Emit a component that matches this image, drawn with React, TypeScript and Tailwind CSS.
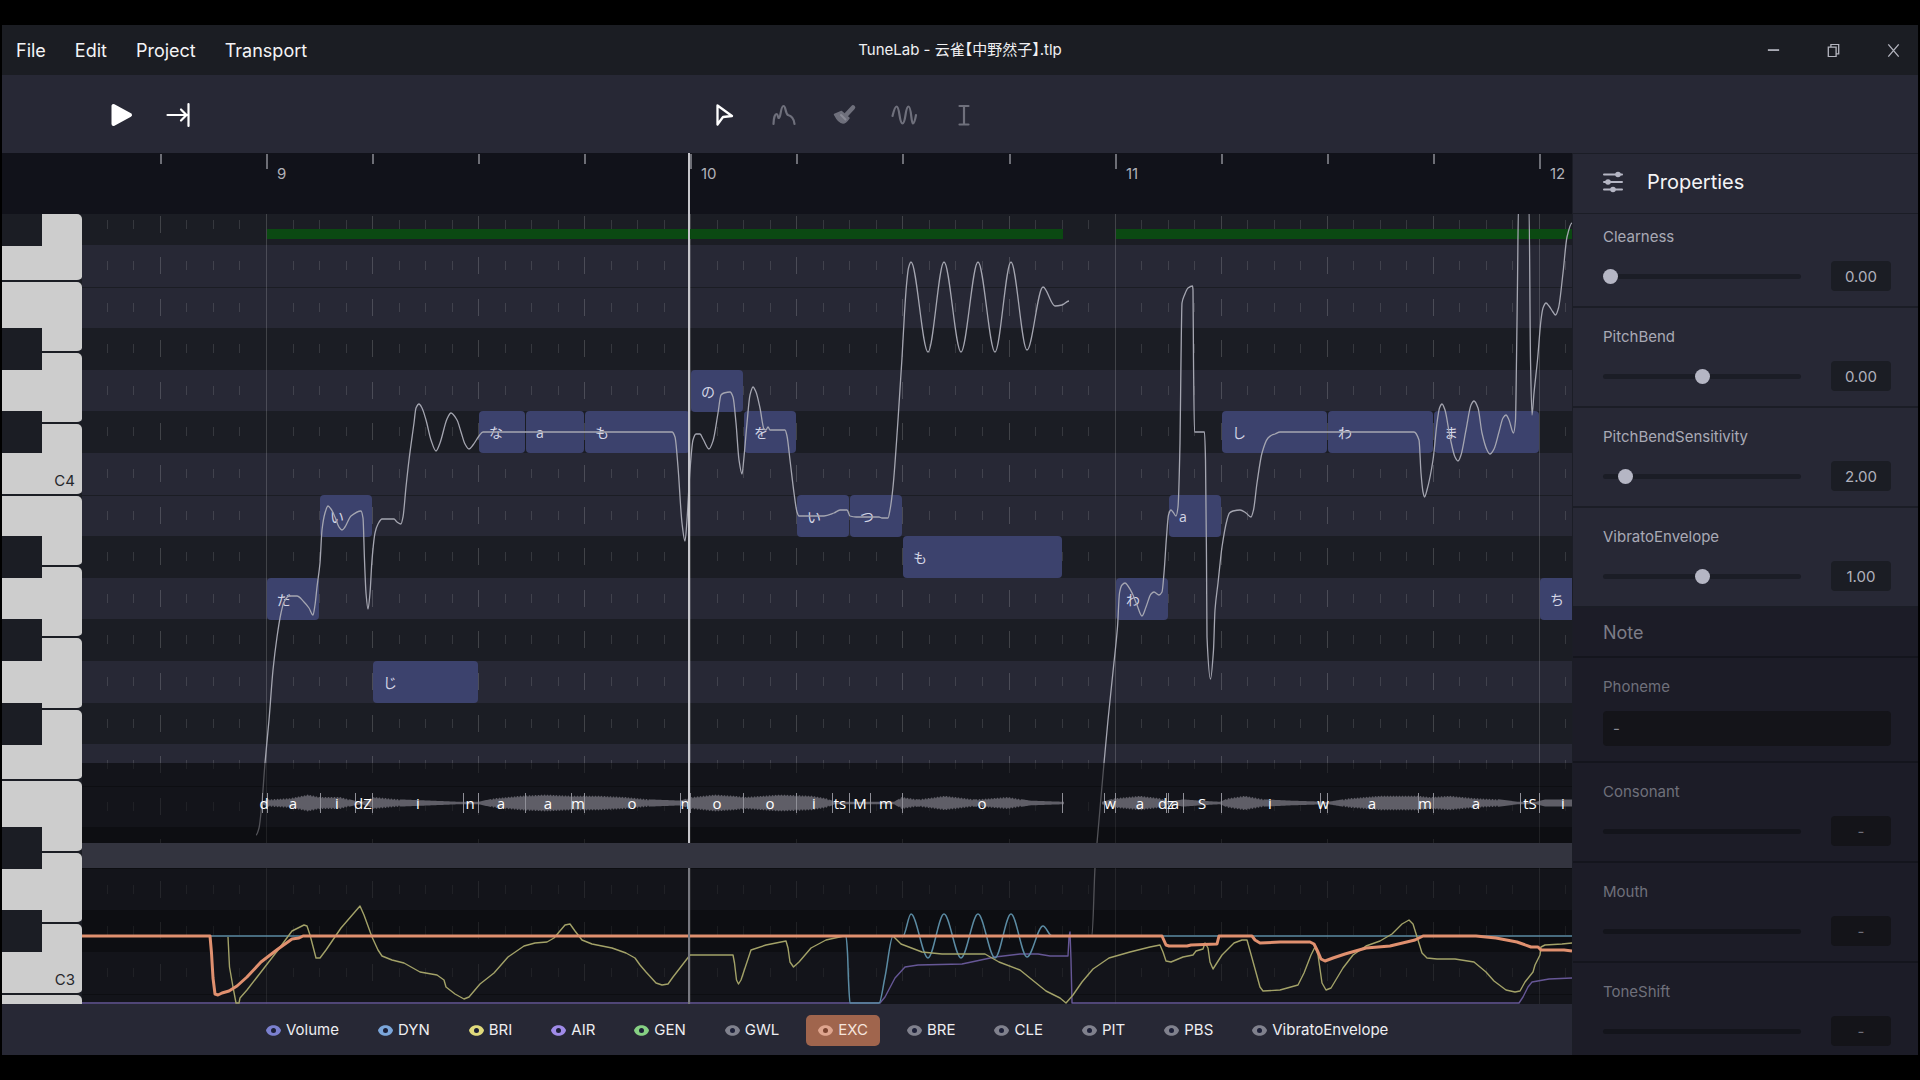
import type { ReactNode } from 'react'
import clsx from 'clsx'

type Point = [number, number]

// Window-space origin of the piano roll; curve data is recorded in window space.
const ROLL_X = 82
const ROLL_Y = 214
const AUTOMATION_Y = 868

const BAR_NINE = 185
const OCTAVE = 499
const C4_TOP = 239

const xOf = (sixteenth: number) => Math.round(BAR_NINE + (sixteenth * 424.3) / 16)
const yOf = (pitch: number) => Math.round(C4_TOP + ((60 - pitch) * OCTAVE) / 12)
const isBlack = (pitch: number) => [1, 3, 6, 8, 10].includes(pitch % 12)

const pitches = Array.from({ length: 20 }, (_, i) => 66 - i)
const steps = Array.from({ length: 60 }, (_, i) => i - 6)

const menus = ['File', 'Edit', 'Project', 'Transport']

const notes = [
  { lyric: 'だ', pitch: 57, start: 0, length: 2 },
  { lyric: 'い', pitch: 59, start: 2, length: 2 },
  { lyric: 'じ', pitch: 55, start: 4, length: 4 },
  { lyric: 'な', pitch: 61, start: 8, length: 1.75 },
  { lyric: 'a', pitch: 61, start: 9.75, length: 2.25 },
  { lyric: 'も', pitch: 61, start: 12, length: 4 },
  { lyric: 'の', pitch: 62, start: 16, length: 2 },
  { lyric: 'を', pitch: 61, start: 18, length: 2 },
  { lyric: 'い', pitch: 59, start: 20, length: 2 },
  { lyric: 'つ', pitch: 59, start: 22, length: 2 },
  { lyric: 'も', pitch: 58, start: 24, length: 6 },
  { lyric: 'わ', pitch: 57, start: 32, length: 2 },
  { lyric: 'a', pitch: 59, start: 34, length: 2 },
  { lyric: 'し', pitch: 61, start: 36, length: 4 },
  { lyric: 'わ', pitch: 61, start: 40, length: 4 },
  { lyric: 'ま', pitch: 61, start: 44, length: 4 },
  { lyric: 'ち', pitch: 57, start: 48, length: 4 },
]

const phonemes: [string, number][] = [
  ['d', 264], ['a', 293], ['i', 337], ['dZ', 363], ['i', 418], ['n', 470], ['a', 501], ['a', 548],
  ['m', 578], ['o', 632], ['n', 685], ['o', 717], ['o', 770], ['i', 814], ['ts', 840], ['M', 860],
  ['m', 886], ['o', 982], ['w', 1110], ['a', 1140], ['dz', 1166], ['a', 1175], ['S', 1202],
  ['i', 1270], ['w', 1323], ['a', 1372], ['m', 1425], ['a', 1476], ['tS', 1530], ['i', 1563],
]

const separators = [
  262, 267, 320, 355, 372, 463, 478, 525, 571, 584, 680, 690, 743, 796, 832, 849, 870, 902, 1062,
  1104, 1115, 1166, 1168, 1183, 1221, 1320, 1327, 1418, 1433, 1520, 1539,
]

// [x, half height] of the rendered audio
const envelopes: Point[][] = [
  [
    [262, 1], [268, 3], [290, 4], [308, 7], [320, 5], [340, 5], [354, 2], [362, 1], [374, 5],
    [400, 3], [430, 2], [460, 1], [478, 1], [495, 4], [520, 6], [545, 7], [572, 6], [600, 6],
    [625, 5], [650, 3], [680, 2], [692, 5], [715, 7], [735, 6], [745, 5], [780, 7], [812, 6],
    [826, 4], [835, 1], [880, 1], [894, 1], [902, 5], [918, 3], [945, 6], [975, 3], [1008, 5],
    [1030, 2], [1064, 1],
  ],
  [
    [1102, 1], [1115, 4], [1140, 6], [1160, 4], [1168, 1], [1183, 3], [1200, 2], [1220, 1],
    [1228, 4], [1245, 6], [1265, 3], [1290, 2], [1328, 1], [1350, 4], [1380, 6], [1418, 6],
    [1430, 5], [1450, 6], [1475, 4], [1500, 3], [1518, 1], [1536, 1], [1545, 3], [1572, 3],
  ],
]

const pitchCurves: Point[][] = [
  [
    [256, 835], [259, 828], [262, 802], [265, 763], [269, 720], [273, 670], [277, 637], [281, 613],
    [284, 602], [289, 596], [297, 596], [304, 602], [309, 608], [313, 615], [315, 605], [317, 587],
    [320, 563], [322, 530], [325, 513], [328, 506], [331, 509], [335, 517], [339, 527], [342, 530],
    [345, 527], [351, 516], [361, 511], [363, 518], [364.5, 560], [366, 593], [368, 609],
    [370, 593], [372, 560], [375, 533], [378, 524], [382, 519], [394, 519], [397, 522], [401, 524],
    [403, 517], [406, 487], [409, 460], [414, 423], [416, 408], [419, 404], [422, 408], [426, 420],
    [431, 440], [436, 451], [440, 443], [447, 419], [451, 413], [457, 420], [461, 432], [465, 444],
    [469, 449], [473, 445], [479, 436], [483, 432], [672, 432], [675, 437], [678, 467], [682, 523],
    [685, 541], [687, 520], [690, 470], [693, 440], [696, 434], [700, 434], [703, 439], [709, 449],
    [713, 441], [718, 413], [721, 395], [724, 393], [730, 392], [733, 397], [736, 423], [739, 460],
    [742, 474], [744, 457], [747, 423], [750, 395], [753, 387], [756, 392], [760, 408], [764, 429],
    [766, 430], [768, 427], [770, 430], [785, 430], [787, 436], [790, 460], [794, 493], [797, 512],
    [799, 516], [809, 516], [824, 516], [834, 513], [840, 510], [847, 510], [850, 516], [856, 517],
    [879, 517], [882, 518], [888, 518], [890, 510], [893, 487], [898, 420], [902, 358],
    [904.5, 313], [906.5, 285], [908.5, 268], [911, 262], [928, 352], [944, 262], [961, 352],
    [978, 262], [995, 352], [1011, 262], [1027, 350], [1043, 287], [1055, 306], [1062, 305],
    [1069, 301],
  ],
  [
    [1092, 935], [1095, 868], [1097, 843], [1104, 763], [1108, 720], [1113.5, 667], [1117.5, 627],
    [1119.5, 593], [1122, 585], [1125, 583], [1128, 586], [1133, 595], [1137, 605], [1142, 616],
    [1146, 607], [1151, 594], [1154, 592], [1159, 595], [1162, 592], [1164, 573], [1166.5, 537],
    [1168.5, 515], [1171, 510], [1173, 512], [1176, 516], [1178, 507], [1180, 443], [1181, 360],
    [1182, 303], [1184.5, 295], [1188, 288], [1192.5, 286], [1193, 290], [1193.5, 360],
    [1194.5, 432], [1204.5, 432], [1205.5, 460], [1206.5, 560], [1207, 637], [1210.5, 679],
    [1213.5, 650], [1215, 610], [1218, 583], [1222, 547], [1227, 520], [1229.5, 513], [1233, 511],
    [1240, 510], [1246, 513], [1251, 517], [1253.5, 510], [1257, 483], [1262, 453], [1268, 438],
    [1272, 435], [1275, 434], [1280, 432], [1414, 432], [1419, 440], [1421, 473], [1423, 492],
    [1424.5, 497], [1427, 490], [1433, 460], [1437, 423], [1439.5, 408], [1442, 404], [1445, 410],
    [1450, 437], [1455, 457], [1458, 461], [1461, 455], [1466, 430], [1471, 405], [1474, 401],
    [1478, 408], [1482, 433], [1487, 450], [1490, 454], [1494, 449], [1499, 432], [1503, 418],
    [1506, 415], [1509, 420], [1513.5, 433], [1515.5, 420], [1516.5, 360], [1517.5, 283],
    [1518.5, 205], [1529, 205], [1530.5, 360], [1532, 415], [1534, 393], [1537.5, 360], [1541, 320],
    [1543, 308], [1546, 303], [1549, 306], [1553, 312], [1555.5, 315], [1558.5, 308], [1563, 273],
    [1567, 237], [1572, 223],
  ],
]

const excCurve: Point[] = [
  [82, 936], [210, 936], [211.5, 953], [213, 978], [215, 994], [218, 995], [222, 993], [229, 991],
  [237, 986], [247, 977], [261, 962], [278, 949], [292, 939], [299, 938], [303, 936], [1162, 936],
  [1166, 945], [1169, 946], [1187, 946], [1191, 945], [1217, 944], [1219, 936], [1252, 936],
  [1255, 940], [1260, 943], [1280, 942], [1310, 942], [1314, 944], [1318, 952], [1321, 959],
  [1325, 961], [1333, 958], [1345, 954], [1366, 948], [1390, 946], [1415, 940], [1423, 936],
  [1476, 936], [1496, 938], [1517, 942], [1531, 947], [1538, 947], [1541, 950], [1564, 950],
  [1572, 951],
]

const briCurve: Point[] = [
  [228, 937], [229.5, 967], [233, 987], [236, 1003], [239, 1003], [240, 998], [247, 990],
  [261, 972], [278, 950], [292, 931], [300, 927], [304, 925], [307, 926], [310, 935], [316, 958],
  [320, 958], [326, 950], [341, 928], [360, 906], [364, 915], [372, 937], [378, 950], [382, 956],
  [392, 960], [404, 963], [420, 972], [437, 975], [444, 980], [446, 987], [455, 994], [464, 999],
  [469, 997], [480, 984], [494, 973], [508, 957], [524, 946], [535, 943], [547, 942], [554, 938],
  [565, 925], [570, 924], [575, 931], [582, 940], [592, 944], [612, 948], [626, 953], [635, 958],
  [640, 965], [646, 972], [656, 983], [662, 985], [668, 984], [673, 977], [690, 955], [733, 955],
  [734.5, 963], [736.5, 980], [738.5, 984], [741, 980], [751, 950], [766, 945], [786, 941],
  [788, 948], [790, 962], [793.5, 967], [799, 962], [811, 948], [826, 940], [844, 936], [893, 936],
  [901, 944], [922, 952], [942, 954], [985, 954], [999, 962], [1020, 970], [1046, 991],
  [1060, 998], [1066, 1003], [1073, 995], [1082, 982], [1093, 969], [1109, 958], [1130, 952],
  [1150, 947], [1160, 945], [1163, 952], [1166, 961], [1171, 962], [1183, 957], [1193, 955],
  [1196, 951], [1203, 949], [1205, 943], [1208, 948], [1210, 962], [1213, 969], [1222, 955],
  [1234, 943], [1242, 940], [1247, 940], [1252, 958], [1260, 987], [1263, 991], [1280, 990],
  [1298, 985], [1304, 973], [1311, 955], [1315, 947], [1318, 955], [1322, 983], [1326, 990],
  [1331, 988], [1343, 968], [1353, 955], [1366, 946], [1380, 941], [1392, 934], [1402, 924],
  [1409, 920], [1413, 924], [1418, 940], [1422, 953], [1427, 958], [1437, 959], [1455, 959],
  [1474, 962], [1486, 972], [1494, 981], [1506, 990], [1515, 992], [1520, 991], [1525, 982],
  [1533, 972], [1535, 965], [1540, 955], [1541, 947], [1545, 945], [1562, 944], [1572, 943],
]

const dynCurve: Point[] = [
  [82, 936], [846, 936], [847.5, 953], [848.5, 980], [850, 1003], [879, 1003], [885, 977],
  [893, 936], [903, 936], [911, 914], [928, 958], [944, 914], [961, 958], [978, 914], [995, 958],
  [1011, 914], [1027, 957], [1043, 926], [1052, 936], [1572, 936],
]

const airCurve: Point[] = [
  [82, 1003], [880, 1003], [885, 997], [895, 978], [905, 967], [918, 965], [962, 964], [995, 957],
  [1020, 954], [1038, 954], [1050, 956], [1068, 956], [1069, 937], [1070, 932], [1071, 960],
  [1072, 1003], [1519, 1003], [1523, 997], [1528, 987], [1532, 982], [1549, 979], [1572, 978],
]

const automations = [
  { name: 'Volume', color: '#7b80cf' },
  { name: 'DYN', color: '#7ba6da' },
  { name: 'BRI', color: '#e0da7c' },
  { name: 'AIR', color: '#a08be8' },
  { name: 'GEN', color: '#86d083' },
  { name: 'GWL' },
  { name: 'EXC', color: '#dfa58e', active: true },
  { name: 'BRE' },
  { name: 'CLE' },
  { name: 'PIT' },
  { name: 'PBS' },
  { name: 'VibratoEnvelope' },
]

// Monotone cubic interpolation, so peaks stay where the data puts them.
function curvePath(points: Point[], offsetY: number) {
  const p = points.map(([x, y]) => [x - ROLL_X, y - offsetY])
  const slope = (i: number) => (p[i + 1][1] - p[i][1]) / (p[i + 1][0] - p[i][0])
  const tangents = p.map((_, i) => {
    if (i === 0 || i === p.length - 1) return 0
    const a = slope(i - 1)
    const b = slope(i)
    return a * b <= 0 ? 0 : (2 * a * b) / (a + b)
  })
  let d = `M${p[0][0]} ${p[0][1]}`
  for (let i = 0; i < p.length - 1; i++) {
    const third = (p[i + 1][0] - p[i][0]) / 3
    d += `C${p[i][0] + third} ${p[i][1] + tangents[i] * third} ${p[i + 1][0] - third} ${
      p[i + 1][1] - tangents[i + 1] * third
    } ${p[i + 1][0]} ${p[i + 1][1]}`
  }
  return d
}

function linePath(points: Point[], offsetY: number) {
  return 'M' + points.map(([x, y]) => `${x - ROLL_X} ${y - offsetY}`).join('L')
}

function wavePath(points: Point[]) {
  const top: string[] = []
  const bottom: string[] = []
  let k = 0
  for (let x = points[0][0]; x <= points[points.length - 1][0]; x++) {
    while (points[k + 1] && points[k + 1][0] < x) k++
    const [x0, h0] = points[k]
    const [x1, h1] = points[k + 1]
    const h = h0 + ((h1 - h0) * (x - x0)) / (x1 - x0)
    const jag = h > 3 && x % 3 === 0 ? 1.5 : 0
    top.push(`${x - ROLL_X} ${40 - h * 1.2 + jag}`)
    bottom.unshift(`${x - ROLL_X} ${40 + h * 1.2 - jag}`)
  }
  return `M${top.join('L')}L${bottom.join('L')}Z`
}

function TitleBar() {
  return (
    <header className="grid h-[50px] shrink-0 grid-cols-[1fr_auto_1fr] items-center bg-[#1b1d23]">
      <nav className="flex gap-[29px] pl-[14px] text-[18px] text-[#f4f4f6]" aria-label="Main menu">
        {menus.map((menu) => (
          <button key={menu} type="button">
            {menu}
          </button>
        ))}
      </nav>
      <h1 className="text-[15px] text-[#f0f0f2] [font-feature-settings:'halt']">
        TuneLab - 云雀【中野然子】.tlp
      </h1>
      <div className="flex justify-end gap-[10px] text-[#b4b5bf]">
        <WindowButton label="Minimize">
          <path d="M1 7h13" strokeWidth="2" />
        </WindowButton>
        <WindowButton label="Restore">
          <path d="M1.500 3.500h9v11h-9zM4.500 3.500v-3h9v11h-3" />
        </WindowButton>
        <WindowButton label="Close">
          <path d="M1.500 .5l12 14M13.500 .5l-12 14" />
        </WindowButton>
      </div>
    </header>
  )
}

function WindowButton({ label, children }: { label: string; children: ReactNode }) {
  return (
    <button type="button" aria-label={label} className="grid h-[50px] w-[50px] place-items-center">
      <svg className="h-[13px] w-[13px]" viewBox="0 0 15 15" fill="none" stroke="currentColor" strokeWidth="1.500">
        {children}
      </svg>
    </button>
  )
}

function ToolButton({ label, children, active }: { label: string; children: ReactNode; active?: boolean }) {
  return (
    <button type="button" aria-label={label} className={active ? 'text-white' : 'text-[#6f707c]'}>
      <svg
        className="h-7 w-7"
        viewBox="0 0 28 28"
        fill="none"
        stroke="currentColor"
        strokeWidth="2.200"
        strokeLinecap="round"
        strokeLinejoin="round"
      >
        {children}
      </svg>
    </button>
  )
}

function Toolbar() {
  return (
    <div className="flex h-[78px] shrink-0 items-center bg-[#272835] pt-px">
      <div className="flex w-[708px] gap-[30px] pl-[105px]">
        <ToolButton label="Play" active>
          <path d="M6.500 5v18L23 14Z" fill="currentColor" strokeWidth="4" />
        </ToolButton>
        <ToolButton label="Go to end" active>
          <path d="M2.500 14h20M16 8.500l5.500 5.500-5.500 5.500M23.500 3v22" strokeWidth="2.200" />
        </ToolButton>
      </div>
      <div className="flex gap-8">
        <ToolButton label="Select" active>
          <path d="M7.500 4.500L22 15L13 16L7.500 23.500Z" strokeWidth="2.300" />
        </ToolButton>
        <ToolButton label="Pitch">
          <path d="M3.500 23c.2-6 1.500-10 3-10 1.800 0 1 4 2.400 4 2 0 1.600-12 4.600-12 2.500 0 1.500 7 4.500 9 4 1 6 3.500 6.500 9" />
        </ToolButton>
        <ToolButton label="Brush">
          <path d="M23 6.500l-6.500 7" strokeWidth="4.500" />
          <path d="M4.500 13.500l7-3 7.500 6.500c-2 3-4 5-6 5-3 0-6.500-4.500-8.500-8.500Z" fill="currentColor" strokeWidth="1.500" />
          <path d="M11 14l4.500 4.500" stroke="#8a8b96" strokeWidth="2" />
        </ToolButton>
        <ToolButton label="Vibrato">
          <path d="M2.500 15c1.500-6 2.500-9.500 4-9.500 3.500 0 2.500 17 6 17s2.500-17 6-17c3 0 2.500 17 4.500 17 1.300 0 2-3 3-8.500" />
        </ToolButton>
        <ToolButton label="Lyric">
          <path d="M9.500 5h9M9.500 23.500h9M14 5v18" />
        </ToolButton>
      </div>
    </div>
  )
}

function Ruler() {
  return (
    <div className="relative h-[61px] shrink-0 overflow-hidden bg-[#11121a] text-[15px] text-[#b0b1b8]">
      <svg className="absolute inset-0 h-full w-full" stroke="#8d8e96" strokeWidth="1.500" aria-hidden>
        {steps
          .filter((s) => s % 4 === 0)
          .map((s) => (
            <path key={s} d={`M${xOf(s) + 80} 1v${s % 16 === 0 ? 15 : 10}`} />
          ))}
      </svg>
      {[9, 10, 11, 12].map((bar, i) => (
        <span key={bar} className="absolute top-[10px]" style={{ left: xOf(i * 16) + 90 }}>
          {bar}
        </span>
      ))}
      <div className="absolute inset-y-0 left-[686px] w-[2px] bg-[#c6c6cb]" />
    </div>
  )
}

function Keyboard() {
  const whiteKeys = [68, 71, 71, 72, 71, 71, 72, 71, 72, 71, 71, 71]
  return (
    <div className="relative flex w-[80px] shrink-0 flex-col overflow-hidden bg-[#1b1d24]">
      {whiteKeys.map((height, i) => (
        <div
          key={i}
          className="flex shrink-0 items-end justify-end rounded-r-[5px] border-b-2 border-[#1b1d24] bg-[#cdcdcd] pr-[7px] pb-[3px] text-[15px] leading-5 text-[#26272c]"
          style={{ height }}
        >
          {i === 3 && 'C4'}
          {i === 10 && 'C3'}
        </div>
      ))}
      {pitches.filter(isBlack).map((pitch) => (
        <div
          key={pitch}
          className="absolute left-0 h-[42px] w-[40px] bg-[#1b1d24]"
          style={{ top: yOf(pitch) }}
        />
      ))}
    </div>
  )
}

function Grid() {
  const ticks = (major: boolean) =>
    pitches
      .flatMap((pitch) =>
        steps
          .filter((s) => s % 16 !== 0 && (s % 4 === 0) === major)
          .map((s) => `M${xOf(s) - 0.5} ${yOf(pitch) + (major ? 12 : 16)}v${major ? 17 : 9}`),
      )
      .join('')
  return (
    <svg className="absolute inset-0 h-full w-full" aria-hidden>
      {pitches.map((pitch) => (
        <rect
          key={pitch}
          y={yOf(pitch)}
          width="100%"
          height={yOf(pitch - 1) - yOf(pitch)}
          fill={isBlack(pitch) ? '#1b1d24' : '#272835'}
        />
      ))}
      {[64, 59, 52, 47].map((pitch) => (
        <rect key={pitch} y={yOf(pitch)} width="100%" height="1" fill="#1b1d24" />
      ))}
      <path d={ticks(true)} stroke="#ffffff" strokeOpacity=".17" />
      <path d={ticks(false)} stroke="#ffffff" strokeOpacity=".12" />
      {[0, 16, 32, 48].map((s) => (
        <path key={s} d={`M${xOf(s) - 0.5} 0v1200`} stroke="#ffffff" strokeOpacity=".17" />
      ))}
      <path d={`M${xOf(0)} 20H${xOf(30)}M${xOf(32)} 20H${xOf(52)}`} stroke="#0b4912" strokeWidth="10" />
    </svg>
  )
}

function Notes() {
  return (
    <>
      {notes.map((note) => (
        <div
          key={note.start}
          className="absolute flex h-[42px] items-center rounded-[4px] bg-[#3c426d] pl-[10px] font-['Open_Sans','Noto_Sans_CJK_JP',sans-serif] text-[14px] text-[#d4d6e6]"
          style={{
            left: xOf(note.start),
            top: yOf(note.pitch),
            width: xOf(note.start + note.length) - xOf(note.start) - 1,
          }}
        >
          {note.lyric}
        </div>
      ))}
    </>
  )
}

function PhonemeLane() {
  return (
    <div className="relative h-[80px] overflow-hidden bg-black/50 font-['Open_Sans',sans-serif] text-[15px] text-white">
      <svg className="absolute inset-0 h-full w-full" aria-hidden>
        {envelopes.map((envelope, i) => (
          <path key={i} d={wavePath(envelope)} fill="#5f5e67" />
        ))}
        <path
          d={separators.map((x) => `M${x - ROLL_X + 0.5} 30v20`).join('')}
          stroke="#8f8f97"
          strokeWidth="1"
        />
      </svg>
      {phonemes.map(([name, x]) => (
        <span
          key={x}
          className="absolute top-[30px] -translate-x-1/2 leading-5"
          style={{ left: x - ROLL_X }}
        >
          {name}
        </span>
      ))}
    </div>
  )
}

function AutomationPane() {
  return (
    <div className="relative h-[136px] shrink-0 overflow-hidden bg-black/50">
      <svg className="absolute inset-0 h-full w-full" fill="none" strokeLinejoin="round" aria-hidden>
        <path d={linePath(airCurve, AUTOMATION_Y)} stroke="#665796" strokeWidth="1.400" />
        <path d={curvePath(dynCurve, AUTOMATION_Y)} stroke="#5b8ba3" strokeWidth="1.500" />
        <path d={linePath(briCurve, AUTOMATION_Y)} stroke="#a3a268" strokeWidth="1.400" />
        <path d={linePath(excCurve, AUTOMATION_Y)} stroke="#e0906f" strokeWidth="3" />
      </svg>
      <div className="absolute inset-y-0 left-[606px] w-[2px] bg-[#77787f]" />
    </div>
  )
}

function PianoRoll() {
  return (
    <div className="relative min-w-0 flex-1 overflow-hidden bg-[#1b1d24]">
      <Grid />
      <Notes />
      <svg className="absolute inset-0 h-full w-full" fill="none" aria-hidden>
        {pitchCurves.map((points, i) => (
          <path key={i} d={curvePath(points, ROLL_Y)} stroke="#a5a6b1" strokeWidth="1.300" />
        ))}
      </svg>
      <div className="absolute inset-0 flex flex-col">
        <div className="relative flex flex-1 flex-col justify-end">
          <PhonemeLane />
          <div className="absolute inset-y-0 left-[606px] w-[2px] bg-[#c6c6cb]" />
        </div>
        <div className="h-[25px] shrink-0 bg-[#33343f]" />
        <AutomationPane />
      </div>
    </div>
  )
}

function AutomationBar() {
  return (
    <div className="flex h-[51px] shrink-0 items-center gap-[15px] bg-[#272835] pt-[2px] pl-[252px]">
      {automations.map(({ name, color, active }) => (
        <button
          key={name}
          type="button"
          className={clsx(
            'flex h-[31px] items-center gap-[5px] rounded-[5px] px-3 text-[15px]',
            active ? 'bg-[#a0654d] text-[#f5e4dc]' : 'text-[#eeeef1]',
          )}
        >
          <svg className="h-[11px] w-[15px]" viewBox="0 0 15 11" aria-hidden>
            <path d="M0 5.500C2-1.500 13-1.500 15 5.500C13 12.500 2 12.500 0 5.500Z" fill={color ?? '#80818d'} />
            <circle cx="7.500" cy="5.500" r="2.500" fill={active ? '#7c4430' : '#1d2038'} />
          </svg>
          {name}
        </button>
      ))}
    </div>
  )
}

interface SliderRowProps {
  label: string
  value?: string
  min?: number
  max?: number
  first?: boolean
}

function SliderRow({ label, value, min = 0, max = 1, first }: SliderRowProps) {
  const id = label.toLowerCase()
  const disabled = value === undefined
  return (
    <div
      className={clsx(
        'flex shrink-0 flex-col justify-end gap-[14px] border-b-2 pr-[27px] pb-[15px] pl-[30px]',
        first ? 'h-[94px]' : 'h-[100px]',
        disabled ? 'border-[#14151d]' : 'border-[#1b1d26]',
      )}
    >
      <label htmlFor={id} className={clsx('text-[15px] leading-5', disabled ? 'text-[#6f707b]' : 'text-[#a9aab6]')}>
        {label}
      </label>
      <div className="flex items-center justify-between">
        <input
          id={id}
          type="range"
          min={min}
          max={max}
          step="0.01"
          defaultValue={value ?? 0}
          disabled={disabled}
          className={clsx(
            'h-[15px] w-[198px] appearance-none bg-transparent [&::-webkit-slider-runnable-track]:h-[5px] [&::-webkit-slider-runnable-track]:rounded-full [&::-webkit-slider-thumb]:-mt-[5px] [&::-webkit-slider-thumb]:h-[15px] [&::-webkit-slider-thumb]:w-[15px] [&::-webkit-slider-thumb]:appearance-none [&::-webkit-slider-thumb]:rounded-full',
            disabled
              ? '[&::-webkit-slider-runnable-track]:bg-[#13141b] [&::-webkit-slider-thumb]:bg-transparent'
              : '[&::-webkit-slider-runnable-track]:bg-[#1b1d26] [&::-webkit-slider-thumb]:bg-[#b5b6c4]',
          )}
        />
        <input
          type="text"
          aria-label={`${label} value`}
          defaultValue={value ?? '-'}
          disabled={disabled}
          className={clsx(
            'h-[30px] w-[60px] rounded-[4px] text-center text-[15px]',
            disabled ? 'bg-[#141419] text-[#6f707b]' : 'bg-[#1b1d24] text-[#b0b1bc]',
          )}
        />
      </div>
    </div>
  )
}

function PropertiesPanel() {
  return (
    <aside className="flex w-[346px] shrink-0 flex-col overflow-hidden border-l border-[#1b1d26] bg-[#272835]">
      <div className="flex h-[61px] shrink-0 items-center gap-6 border-y border-[#1b1d26] pb-[3px] pl-[30px]">
        <svg className="h-[22px] w-5" viewBox="0 0 20 22" fill="#b5b6c4" stroke="#b5b6c4" strokeWidth="2" strokeLinecap="round" aria-hidden>
          <path d="M1 3.500h18M1 11h18M1 18.500h18" />
          <circle cx="15" cy="3.500" r="1.800" />
          <circle cx="5" cy="11" r="1.800" />
          <circle cx="10" cy="18.500" r="1.800" />
        </svg>
        <h2 className="text-[20px] text-[#f4f4f6]">Properties</h2>
      </div>
      <SliderRow label="Clearness" value="0.00" first />
      <SliderRow label="PitchBend" value="0.00" min={-1} />
      <SliderRow label="PitchBendSensitivity" value="2.00" max={24} />
      <SliderRow label="VibratoEnvelope" value="1.00" max={2} />
      <section className="flex-1 bg-[#1c1c27]" aria-label="Note">
        <h3 className="flex h-[50px] items-center border-b-2 border-[#14151d] pl-[30px] text-[18px] text-[#7c7d87]">
          Note
        </h3>
        <div className="flex h-[105px] flex-col gap-[14px] border-b-2 border-[#14151d] pt-[19px] pr-[27px] pl-[30px]">
          <label htmlFor="phoneme" className="text-[15px] leading-5 text-[#6f707b]">
            Phoneme
          </label>
          <input
            id="phoneme"
            type="text"
            defaultValue="-"
            disabled
            className="h-[35px] rounded-[4px] bg-[#141419] px-[10px] text-[15px] text-[#8a8b94]"
          />
        </div>
        <SliderRow label="Consonant" />
        <SliderRow label="Mouth" />
        <SliderRow label="ToneShift" />
      </section>
    </aside>
  )
}

export default function App() {
  return (
    <div className="h-screen bg-black px-[2px] py-[25px] font-['Inter','Noto_Sans_CJK_SC',sans-serif]">
      <div className="flex h-full flex-col overflow-hidden">
        <TitleBar />
        <Toolbar />
        <div className="flex min-h-0 flex-1">
          <main className="flex min-w-0 flex-1 flex-col">
            <Ruler />
            <div className="flex min-h-0 flex-1">
              <Keyboard />
              <PianoRoll />
            </div>
            <AutomationBar />
          </main>
          <PropertiesPanel />
        </div>
      </div>
    </div>
  )
}
